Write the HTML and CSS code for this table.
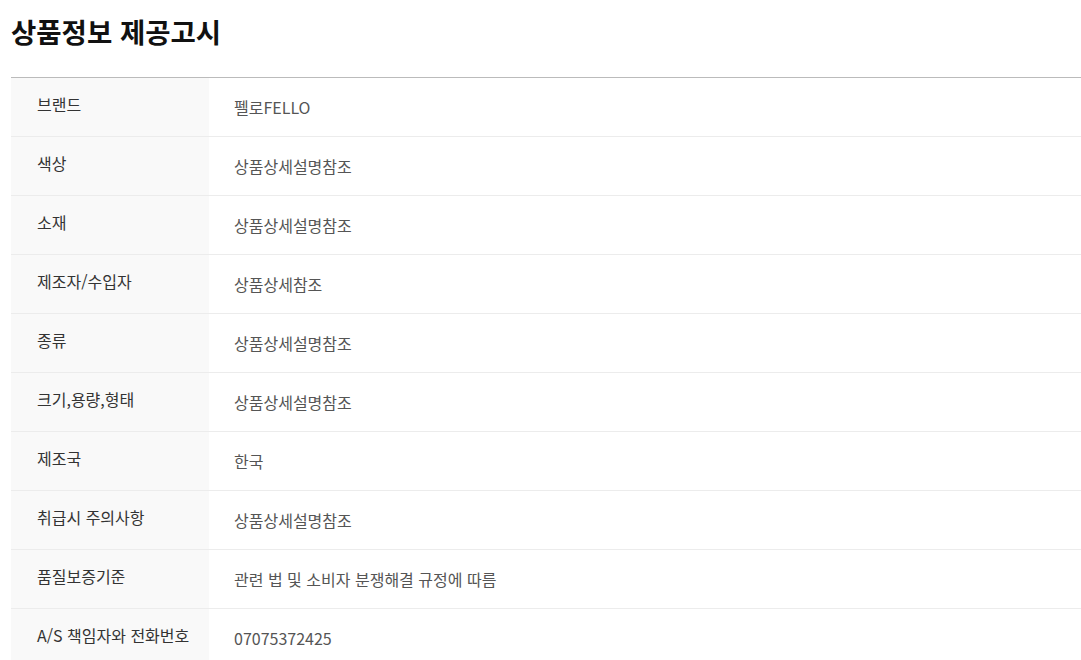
FILE: index.html
```html
<!DOCTYPE html>
<html lang="ko">
<head>
  <meta charset="UTF-8">
  <title>상품정보 제공고시</title>
  <link rel="stylesheet" href="styles.css">
</head>
<body>

<div class="notice">
  <h2 class="notice-title">상품정보 제공고시</h2>

  <table class="notice-table">
    <tr><th>브랜드</th><td>펠로FELLO</td></tr>
    <tr><th>색상</th><td>상품상세설명참조</td></tr>
    <tr><th>소재</th><td>상품상세설명참조</td></tr>
    <tr><th>제조자/수입자</th><td>상품상세참조</td></tr>
    <tr><th>종류</th><td>상품상세설명참조</td></tr>
    <tr><th>크기,용량,형태</th><td>상품상세설명참조</td></tr>
    <tr><th>제조국</th><td>한국</td></tr>
    <tr><th>취급시 주의사항</th><td>상품상세설명참조</td></tr>
    <tr><th>품질보증기준</th><td>관련 법 및 소비자 분쟁해결 규정에 따름</td></tr>
    <tr><th>A/S 책임자와 전화번호</th><td>07075372425</td></tr>
  </table>
</div>

</body>
</html>
```

FILE: styles.css
```css
body {
  margin: 0;
  padding: 0;
  background: #fff;
  font-family: "Noto Sans CJK KR", "Noto Sans", sans-serif;
  color: #333;
}
.notice {
  padding: 0 0 0 11px;
}
.notice-title {
  margin: 0;
  padding: 11px 0 0 0;
  height: 77px;
  box-sizing: border-box;
  font-size: 27.5px;
  line-height: 40px;
  font-weight: 700;
  color: #111;
}
.notice-table {
  width: 1080px;
  table-layout: fixed;
  border-collapse: collapse;
  border-top: 1px solid #bbb;
}
.notice-table tr {
  border-bottom: 1px solid #ececec;
}
.notice-table th {
  width: 198px;
  height: 58px;
  box-sizing: border-box;
  padding: 14px 10px 18px 26px;
  background: #f9f9f9;
  text-align: left;
  vertical-align: top;
  font-size: 16px;
  line-height: 24px;
  font-weight: 400;
  white-space: nowrap;
  color: #333;
}
.notice-table td {
  height: 58px;
  box-sizing: border-box;
  padding: 17px 26px 17px 25px;
  vertical-align: top;
  font-size: 16px;
  line-height: 24px;
  color: #555;
}
```
